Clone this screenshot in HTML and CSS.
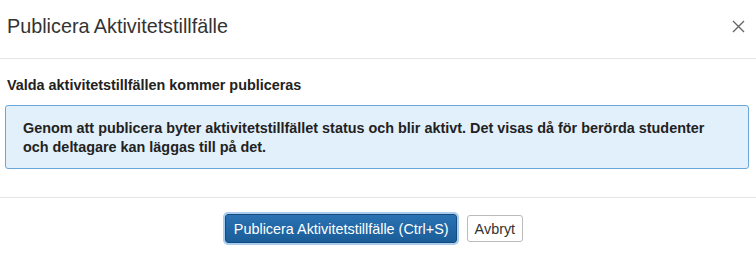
FILE: index.html
```html
<!DOCTYPE html>
<html lang="sv">
<head>
<meta charset="utf-8">
<title>Publicera Aktivitetstillfälle</title>
<link rel="stylesheet" href="styles.css">
</head>
<body>
<div class="modal">
  <div class="modal-header">
    <h4 class="modal-title">Publicera Aktivitetstillfälle</h4>
    <button class="close" type="button" aria-label="Stäng">
      <svg width="13" height="13" viewBox="0 0 13 13"><path d="M1 1 L12 12 M12 1 L1 12" stroke="#666" stroke-width="1.4" fill="none"/></svg>
    </button>
  </div>
  <div class="modal-body">
    <p class="lead-text">Valda aktivitetstillfällen kommer publiceras</p>
    <div class="alert">Genom att publicera byter aktivitetstillfället status och blir aktivt. Det visas då för berörda studenter och deltagare kan läggas till på det.</div>
  </div>
  <div class="modal-footer">
    <button class="btn btn-primary" type="button">Publicera Aktivitetstillfälle (Ctrl+S)</button>
    <button class="btn btn-default" type="button">Avbryt</button>
  </div>
</div>
</body>
</html>
```

FILE: styles.css
```css
html, body {
  margin: 0;
  padding: 0;
  background: #fff;
}
body {
  font-family: "Liberation Sans", Arial, sans-serif;
  color: #333;
  font-size: 14.4px;
}
.modal {
  width: 756px;
}
.modal-header {
  display: flex;
  justify-content: space-between;
  align-items: flex-start;
  padding: 14px 11px 20px 7px;
  border-bottom: 1px solid #e5e5e5;
}
.modal-title {
  margin: 0;
  font-size: 19.8px;
  font-weight: normal;
  line-height: 24px;
  color: #333;
}
.close {
  border: 0;
  background: transparent;
  padding: 0;
  margin-top: 6px;
  width: 13px;
  height: 13px;
  display: block;
  cursor: pointer;
}
.close svg { display: block; }
.modal-body {
  padding: 15px 7px 28px 5px;
}
.lead-text {
  margin: 0 0 9px 2px;
  font-weight: bold;
  line-height: 22px;
  color: #222;
}
.alert {
  background: #e2f0fb;
  border: 1px solid #6aa6da;
  border-radius: 3px;
  padding: 13px 16px 12px 17px;
  font-weight: bold;
  line-height: 18.5px;
  color: #222;
}
.modal-footer {
  border-top: 1px solid #e5e5e5;
  display: flex;
  justify-content: center;
  align-items: center;
  gap: 10px;
  padding: 16px 8px 12px 0;
}
.btn {
  font-family: "Liberation Sans", Arial, sans-serif;
  font-size: 14.4px;
  border-radius: 3px;
  cursor: pointer;
  line-height: 18px;
}
.btn-primary {
  height: 29px;
  padding: 0 7.5px;
  color: #fff;
  background: linear-gradient(#2a72b3, #1a5d98);
  border: 1px solid #144b7c;
  box-shadow: 0 0 0 2px #a9cdee;
}
.btn-default {
  height: 27px;
  padding: 0 6.5px;
  color: #333;
  background: #fff;
  border: 1px solid #bbb;
}
```
